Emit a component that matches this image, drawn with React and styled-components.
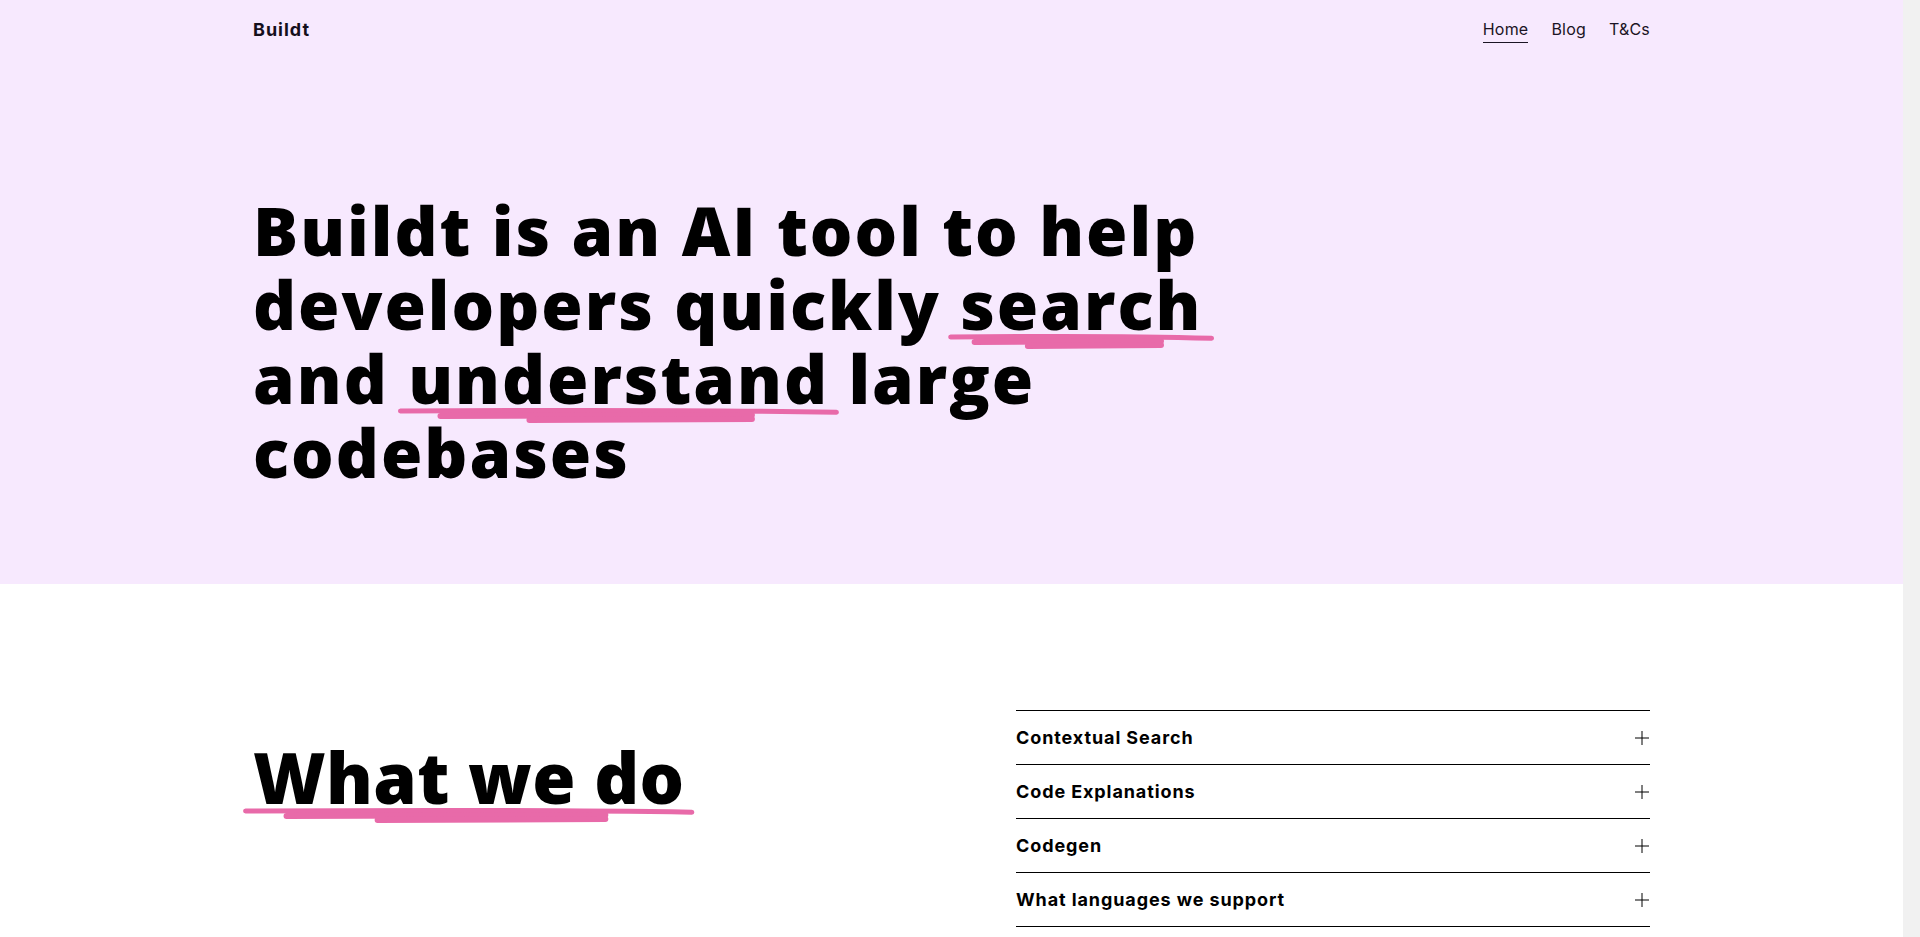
import React from 'react';
import styled, { createGlobalStyle } from 'styled-components';

const GlobalStyle = createGlobalStyle`
  html, body {
    margin: 0;
    padding: 0;
  }
  body {
    font-family: Inter, "Open Sans", "Liberation Sans", sans-serif;
    color: #000;
    background: #fff;
  }
`

// the reference was taken with a classic 17px scrollbar, so the page is laid out in 1903px
const Page = styled.div`
  min-height: 4977px;
  border-right: 17px solid #f1f1f1;
`

const Hero = styled.header`
  background: #f7e9fe;
  padding-bottom: 95px;
`

const Container = styled.div`
  max-width: 1397px;
  margin: 0 auto;
`

const Nav = styled.nav`
  display: flex;
  align-items: center;
  justify-content: space-between;
  height: 58px;
`

const Logo = styled.a`
  font-size: 18px;
  font-weight: 700;
  color: #150f1c;
  text-decoration: none;
  letter-spacing: 1px;
`

const Links = styled.ul`
  display: flex;
  gap: 23px;
  list-style: none;
  margin: 0;
  padding: 0;
`

const NavLink = styled.a`
  font-size: 16px;
  color: #1b1424;
  text-decoration: none;
  letter-spacing: 0.2px;
  padding-bottom: 3px;
  border-bottom: 1.5px solid ${p => (p.$active ? '#1b1424' : 'transparent')};
`

const Headline = styled.h1`
  margin: 135px 0 0;
  max-width: 1000px;
  font-family: "Open Sans", Inter, sans-serif;
  font-size: 67px;
  font-weight: 800;
  line-height: 74px;
  letter-spacing: 2px;
`

const Mark = styled.span`
  position: relative;
`

const MarkWord = styled.span`
  position: relative;
  z-index: 1;
`

const Stroke = styled.svg`
  position: absolute;
  left: -12px;
  width: calc(100% + 24px);
  top: calc(100% - 0.293em + 4px);
  height: 17px;
  z-index: 0;
  overflow: visible;
`

const Section = styled.section`
  padding-top: 126px;
`

const Grid = styled.div`
  display: grid;
  grid-template-columns: 1fr 634px;
  gap: 129px;
`

const SectionTitle = styled.h2`
  margin: 29px 0 0;
  font-family: "Open Sans", Inter, sans-serif;
  font-size: 70px;
  font-weight: 800;
  line-height: 76px;
  letter-spacing: 0.3px;
`

const Accordion = styled.div`
  border-bottom: 1px solid #000;
`

const Row = styled.button`
  display: flex;
  align-items: center;
  justify-content: space-between;
  width: 100%;
  height: 54px;
  padding: 0 1px 0 0;
  background: none;
  border: 0;
  border-top: 1px solid #000;
  font-family: inherit;
  font-size: 18px;
  font-weight: 700;
  letter-spacing: 0.9px;
  color: #000;
  text-align: left;
  cursor: pointer;
`

const Scribble = () => (
  <Stroke viewBox="0 0 100 17" preserveAspectRatio="none" aria-hidden="true">
    <g fill="none" stroke="#e86aa9" strokeLinecap="round">
      <path d="M1 3 C30 2.2 70 2 99 4.2" strokeWidth="5" vectorEffect="non-scaling-stroke" />
      <path d="M10 8 C35 7.4 60 7.2 80 7" strokeWidth="6" vectorEffect="non-scaling-stroke" />
      <path d="M30 12 C50 11.6 66 11.4 80 11" strokeWidth="6" vectorEffect="non-scaling-stroke" />
    </g>
  </Stroke>
)

const Highlight = ({ children }) => (
  <Mark>
    <Scribble />
    <MarkWord>{children}</MarkWord>
  </Mark>
)

const Plus = () => (
  <svg width="14" height="14" viewBox="0 0 14 14" aria-hidden="true">
    <path d="M7 0v14M0 7h14" stroke="#000" strokeWidth="1" />
  </svg>
)

const items = ['Contextual Search', 'Code Explanations', 'Codegen', 'What languages we support']

const App = () => {
  return (
    <Page>
      <GlobalStyle />
      <Hero>
        <Container>
          <Nav>
            <Logo href="#">Buildt</Logo>
            <Links>
              <li><NavLink href="#" $active>Home</NavLink></li>
              <li><NavLink href="#">Blog</NavLink></li>
              <li><NavLink href="#">T&amp;Cs</NavLink></li>
            </Links>
          </Nav>
          <Headline>
            Buildt is an AI tool to help developers quickly <Highlight>search</Highlight> and{' '}
            <Highlight>understand</Highlight> large codebases
          </Headline>
        </Container>
      </Hero>
      <Section>
        <Container>
          <Grid>
            <SectionTitle>
              <Highlight>What we do</Highlight>
            </SectionTitle>
            <Accordion>
              {items.map(item => (
                <Row key={item}>
                  {item}
                  <Plus />
                </Row>
              ))}
            </Accordion>
          </Grid>
        </Container>
      </Section>
    </Page>
  )
}

export default App;
